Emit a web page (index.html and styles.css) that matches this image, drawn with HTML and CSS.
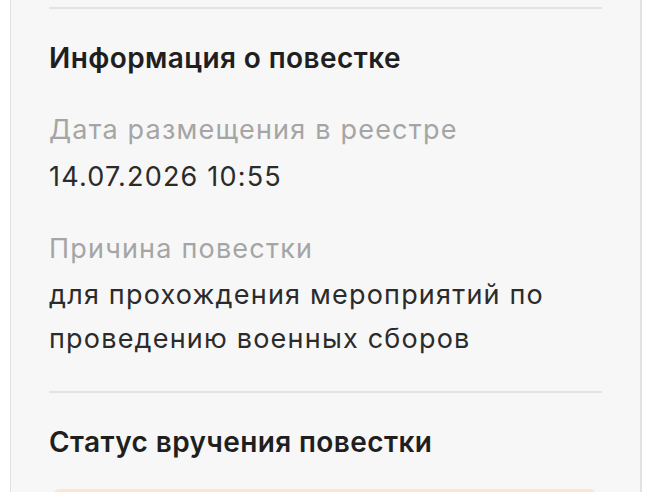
FILE: index.html
```html
<!DOCTYPE html>
<html lang="ru">
<head>
<meta charset="utf-8">
<title>Повестка</title>
<link rel="stylesheet" href="styles.css">
</head>
<body>
<div class="card">
  <hr class="divider">
  <section class="section section-info">
    <h2 class="section-title">Информация о повестке</h2>
    <div class="field field-date">
      <div class="field-label">Дата размещения в реестре</div>
      <div class="field-value">14.07.2026 10:55</div>
    </div>
    <div class="field field-reason">
      <div class="field-label">Причина повестки</div>
      <div class="field-value">для прохождения мероприятий по проведению военных сборов</div>
    </div>
  </section>
  <hr class="divider">
  <section class="section">
    <h2 class="section-title">Статус вручения повестки</h2>
    <div class="status-banner"></div>
  </section>
</div>
</body>
</html>
```

FILE: styles.css
```css
html, body {
  margin: 0;
  padding: 0;
  background: #ffffff;
  height: 100%;
  overflow: hidden;
}

body {
  font-family: Inter, Roboto, "Noto Sans", sans-serif;
  color: #262626;
}

.card {
  margin: 0 14px 0 10px;
  min-height: 100%;
  background: #f7f7f7;
  border-left: 1px solid #e2e2e2;
  border-right: 2px solid #e2e2e2;
  padding: 7px 38px 0 38px;
  box-sizing: border-box;
}

.divider {
  margin: 0;
  border: 0;
  height: 2px;
  background: #e3e3e3;
}

.section {
  padding: 31px 0 32px;
}

.section-info {
  padding-bottom: 30px;
}

.section-title {
  margin: 0;
  font-size: 28px;
  line-height: 36px;
  font-weight: 600;
  color: #1f1f1f;
  letter-spacing: 0.4px;
}

.field {
  display: flex;
  flex-direction: column;
}

.field-date {
  margin-top: 32px;
  gap: 3px;
}

.field-reason {
  margin-top: 28px;
  gap: 2px;
}

.field-label,
.field-value {
  font-size: 27px;
  line-height: 44px;
  letter-spacing: 1.2px;
}

.field-label {
  color: #a5a5a5;
}

.field-value {
  color: #2b2b2b;
}

.status-banner {
  margin-top: 29px;
  height: 40px;
  border-radius: 8px;
  margin-left: 3px;
  margin-right: 5px;
  background: #fde4d2;
}
```
